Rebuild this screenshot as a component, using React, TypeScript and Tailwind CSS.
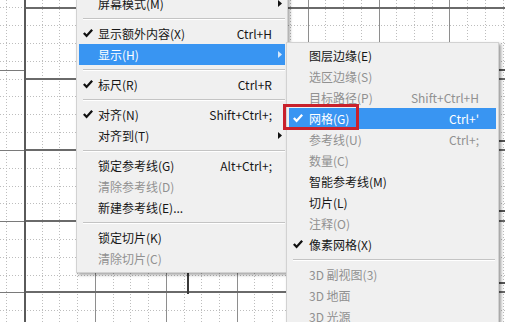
import React from 'react';

type Row =
  | { sep: true }
  | {
      sep?: false;
      label: string;
      shortcut?: string;
      checked?: boolean;
      disabled?: boolean;
      sub?: boolean;
      active?: boolean;
    };

const mainMenu: Row[] = [
  { label: '屏幕模式(M)', sub: true },
  { sep: true },
  { label: '显示额外内容(X)', shortcut: 'Ctrl+H', checked: true },
  { label: '显示(H)', sub: true, active: true },
  { sep: true },
  { label: '标尺(R)', shortcut: 'Ctrl+R', checked: true },
  { sep: true },
  { label: '对齐(N)', shortcut: 'Shift+Ctrl+;', checked: true },
  { label: '对齐到(T)', sub: true },
  { sep: true },
  { label: '锁定参考线(G)', shortcut: 'Alt+Ctrl+;' },
  { label: '清除参考线(D)', disabled: true },
  { label: '新建参考线(E)...' },
  { sep: true },
  { label: '锁定切片(K)' },
  { label: '清除切片(C)', disabled: true },
];

const showMenu: Row[] = [
  { label: '图层边缘(E)' },
  { label: '选区边缘(S)', disabled: true },
  { label: '目标路径(P)', shortcut: 'Shift+Ctrl+H', disabled: true },
  { label: '网格(G)', shortcut: "Ctrl+'", checked: true, active: true },
  { label: '参考线(U)', shortcut: 'Ctrl+;', disabled: true },
  { label: '数量(C)', disabled: true },
  { label: '智能参考线(M)' },
  { label: '切片(L)' },
  { label: '注释(O)', disabled: true },
  { label: '像素网格(X)', checked: true },
  { sep: true },
  { label: '3D 副视图(3)', disabled: true },
  { label: '3D 地面', disabled: true },
  { label: '3D 光源', disabled: true },
];

function Check({ white }: { white?: boolean }) {
  return (
    <svg viewBox="0 0 10 9" className="w-[10px] h-[9px]" fill={white ? '#ffffff' : '#111111'}>
      <path d="M0 4.8 L1.7 3.2 L3.6 5.2 L8.3 0 L10 1.5 L3.6 8.6 Z" />
    </svg>
  );
}

function Arrow({ light }: { light?: boolean }) {
  return (
    <svg viewBox="0 0 4 7" className="w-[4px] h-[7px]" fill={light ? '#d6e8fb' : '#111111'}>
      <path d="M0 0 L4 3.5 L0 7 Z" />
    </svg>
  );
}

function Menu({ rows, sub }: { rows: Row[]; sub?: boolean }) {
  return (
    <>
      {rows.map((r, i) =>
        r.sep ? (
          <div key={i} className={`h-[9px] flex flex-col justify-center ${sub ? 'ml-[6px] mr-[3px]' : 'ml-[6px] mr-[2px]'}`}>
            <div className="h-px bg-[#c4c4c4]" />
            <div className="h-px bg-white" />
          </div>
        ) : (
          <div
            key={i}
            className={`h-[21px] mx-[2px] flex items-center leading-[21px] ${
              r.active ? 'bg-[#3995f2] text-white' : r.disabled ? 'text-[#919191]' : 'text-[#161616]'
            }`}
          >
            <div className={`${sub ? 'w-[20px] pl-[4px]' : 'w-[19px] pl-[4px]'} flex items-center`}>
              {r.checked && <Check white={r.active} />}
            </div>
            <span className="flex-1 whitespace-nowrap">{r.label}</span>
            {r.shortcut && <span className="whitespace-nowrap">{r.shortcut}</span>}
            <div className={`${sub ? 'w-[17px]' : 'w-[13px] pl-[6px]'} flex items-center`}>
              {r.sub && <Arrow light={r.active} />}
            </div>
          </div>
        )
      )}
    </>
  );
}

function Grid() {
  const vMajor = 70.9;
  const hMajor = 71.2;
  const x0 = 24;
  const y0 = 7.5;
  const minorV: number[] = [];
  for (let x = x0 - vMajor; x < 505; x += vMajor / 4) minorV.push(x);
  const minorH: number[] = [];
  for (let y = y0 - hMajor; y < 322; y += hMajor / 4) minorH.push(y);
  const majorV: number[] = [];
  for (let x = x0 + vMajor; x < 505; x += vMajor) majorV.push(x);
  const majorH: number[] = [];
  for (let y = y0; y < 322; y += hMajor) majorH.push(y);

  return (
    <svg width="505" height="322" className="absolute inset-0">
      <rect width="505" height="322" fill="#ffffff" />
      {minorV.map((x, i) => (
        <line key={'mv' + i} x1={Math.round(x) + 0.5} y1={0} x2={Math.round(x) + 0.5} y2={322} stroke="#bdbdbd" strokeDasharray="1 2" />
      ))}
      {minorH.map((y, i) => (
        <line key={'mh' + i} x1={0} y1={Math.round(y) + 0.5} x2={505} y2={Math.round(y) + 0.5} stroke="#bdbdbd" strokeDasharray="1 2" />
      ))}
      {majorV.map((x, i) => (
        <line key={'Mv' + i} x1={Math.round(x) + 0.5} y1={0} x2={Math.round(x) + 0.5} y2={322} stroke="#8e8e8e" />
      ))}
      {[70.5, 150.5, 221.5, 292.5].map((y, i) => (
        <line key={'lh' + i} x1={0} y1={y} x2={24} y2={y} stroke="#7a7a7a" />
      ))}
      {majorH.map((y, i) => (
        <line key={'Mh' + i} x1={24} y1={Math.round(y)} x2={505} y2={Math.round(y)} stroke="#6a6a6a" strokeWidth="2" />
      ))}
      <line x1={25} y1={0} x2={25} y2={322} stroke="#5a5a5a" strokeWidth="2" />
      <line x1={188} y1={271} x2={188} y2={294} stroke="#3a3a3a" strokeWidth="2" />
      {[70, 141, 211, 283].map((y, i) => (
        <line key={'rt' + i} x1={499} y1={y} x2={505} y2={y} stroke="#555555" strokeWidth="2" />
      ))}
    </svg>
  );
}

export default function App() {
  return (
    <div className="relative w-[505px] h-[322px] overflow-hidden bg-white text-[12px] font-['Noto_Sans_CJK_SC','Microsoft_YaHei',sans-serif]">
      <Grid />

      {/* View menu */}
      <div className="absolute left-[76px] top-[-11px] w-[212px] py-[3px] bg-[#f0f0f0] border border-[#d2d2d2] shadow-[2px_2px_3px_rgba(0,0,0,0.35)]">
        <Menu rows={mainMenu} />
      </div>

      {/* Show submenu */}
      <div className="absolute left-[286px] top-[42px] w-[213px] pt-[2px] pb-[3px] bg-[#f0f0f0] border border-[#d2d2d2] shadow-[2px_2px_3px_rgba(0,0,0,0.4)]">
        <Menu rows={showMenu} sub />
      </div>

      {/* annotation box */}
      <div className="absolute left-[283px] top-[104px] w-[76px] h-[26px] border-[3px] border-[#c9212b]" />
    </div>
  );
}
